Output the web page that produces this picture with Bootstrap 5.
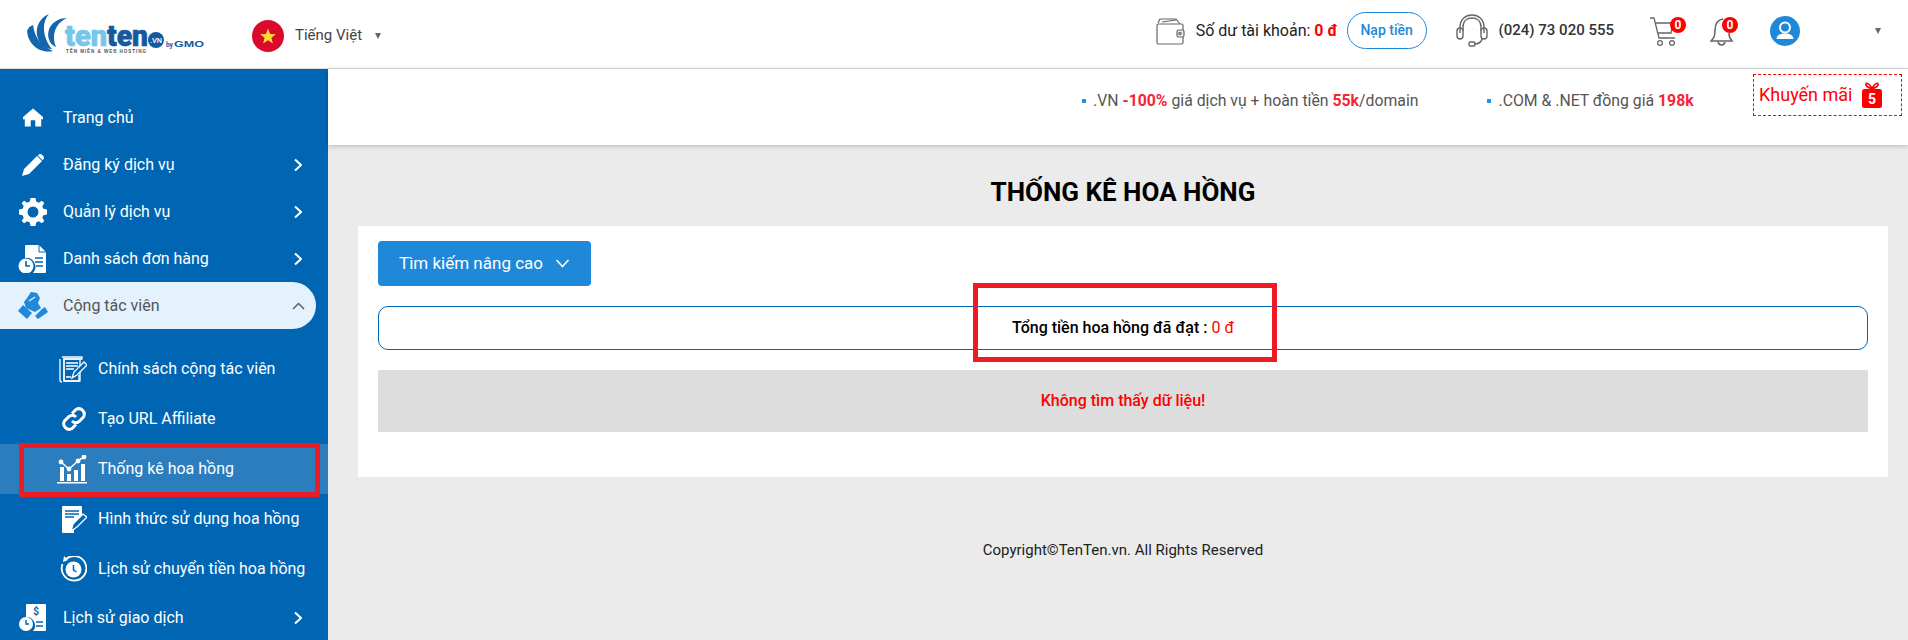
<!DOCTYPE html>
<html lang="vi">
<head>
<meta charset="utf-8">
<title>Thống kê hoa hồng</title>
<link href="https://cdn.jsdelivr.net/npm/bootstrap@5.3.0/dist/css/bootstrap.min.css" rel="stylesheet">
<style>
html,body{height:640px;overflow:hidden}
body{font-family:Roboto,"Liberation Sans",sans-serif;font-size:14px;background:#ebebeb;color:#111;position:relative;width:1908px}
.top-bar{height:69px;background:#fff;border-bottom:1px solid #ddd;position:relative}
.left-group{padding-top:3px;margin-right:auto}
.right-group{padding-bottom:7px}
.logo-box{margin-left:26px;width:180px;height:46px;flex:none;margin-top:-3px}
.flag-box{margin-left:46px;flex:none}
.lang-name{margin-left:11px;font-size:15px;color:#444}
.caret-mark{width:0;height:0;border-left:3.5px solid transparent;border-right:3.5px solid transparent;border-top:6px solid #666;flex:none}
.lang-caret{margin-left:13px}
.bal-text{margin-left:11px;font-size:16px;color:#222;white-space:nowrap}
.red-val{color:#f00;font-weight:700}
.topup{margin-left:9px;width:80px;height:37px;border:1px solid #1f88d9;border-radius:19px;color:#1f88d9;font-size:14px;font-weight:500;padding:0;background:#fff}
.topup:hover{color:#1f88d9;background:#fff}
.head-ic{margin-left:29px;flex:none}
.phone-no{margin-left:11px;font-size:15px;font-weight:500;color:#333;white-space:nowrap}
.cart-wrap{margin-left:36px;width:36px;height:36px;position:relative;flex:none}
.bell-wrap{margin-left:24px;width:28px;height:36px;position:relative;flex:none}
.count-dot{position:absolute;top:4px;right:0;width:16px;height:16px;border-radius:50%;background:#f00;color:#fff;font-size:12px;font-weight:700;line-height:16px;text-align:center}
.ava-wrap{margin-left:32px;flex:none}
.user-caret{margin-left:75px;margin-right:27px}
.side-panel{width:328px;height:571px;background:#0066b3;padding-top:25px;flex:none;overflow:hidden;color:#fff}
.menu-row{height:47px;display:flex;align-items:center;position:relative;font-size:16px;color:#fff;text-decoration:none;width:316px;font-weight:400}
.menu-row:hover{color:#fff}
.menu-ic{width:63px;flex:none;display:flex;justify-content:center;padding-right:6px;padding-left:8px}
.chev-ic{position:absolute;left:294px;top:50%;transform:translateY(-50%)}
.chev-up{left:292px}
.menu-open{background:#e3f2fc;color:#555;border-radius:0 24px 24px 0;margin-bottom:15px}
.menu-open:hover{color:#555}
.sub-row{height:50px;display:flex;align-items:center;font-size:16px;color:#fff;text-decoration:none;width:328px;font-weight:400}
.sub-row:hover{color:#fff}
.sub-row.on-row{background:#2b7dbd}
.sub-ic{width:98px;flex:none;display:flex;justify-content:flex-end;padding-right:11px}
.promo-strip{height:76px;background:#fff;box-shadow:0 1px 5px rgba(0,0,0,.22);position:relative;color:#555;font-size:15.8px}
.promo-item{display:flex;align-items:center;white-space:nowrap;padding-bottom:12px}
.promo-item b{color:#f42535;font-weight:700}
.sq-dot{width:4px;height:4px;background:#1e90f0;margin-right:7px;flex:none}
.item-one{margin-left:754px}
.item-two{margin-left:69px}
.sale-box{margin-left:auto;margin-right:6px;align-self:flex-start;margin-top:5px;width:149px;height:42px;border:1px dashed #f00;color:#f00;font-size:18px;display:flex;align-items:center;padding-left:5px;white-space:nowrap;line-height:1}
.gift-ic{margin-left:10px}
.page-head{font-size:26px;font-weight:700;color:#000;text-align:center;margin:0;height:81px;line-height:1;padding-top:34px;padding-left:10px}
.white-panel{margin:0 20px 0 30px;width:1530px;height:251px;background:#fff;padding:15px 20px;border:0;border-radius:0}
.search-btn{width:213px;height:45px;background:#1f88d9;border:0;border-radius:4px;font-size:17px;color:#fff;display:flex;align-items:center;padding:0 0 0 21px;font-weight:400}
.search-btn:hover{background:#1f88d9;color:#fff}
.search-chev{margin-left:12px}
.total-box{margin-top:20px;height:44px;border:1px solid #0066b3;border-radius:10px;display:flex;align-items:center;justify-content:center;font-size:16px;font-weight:500;color:#000;width:1490px}
.total-box span{color:#f00;font-weight:400;margin-left:4px}
.empty-box{margin-top:20px;height:62px;background:#ddd;display:flex;align-items:center;justify-content:center;color:#f00;font-size:16px;font-weight:500;width:1490px}
.foot-line{text-align:center;font-size:15px;color:#222;margin-top:62px;padding-left:10px}
.mark-red{position:absolute;border:5px solid #ed1c24;pointer-events:none}
.mark-side{left:19px;top:443px;width:301px;height:54px}
.mark-total{left:973px;top:283px;width:304px;height:79px}
</style>
</head>
<body>
<header class="top-bar d-flex align-items-center">
  <div class="left-group d-flex align-items-center">
  <div class="logo-box">
    <svg width="180" height="46" viewBox="0 0 180 46">
      <path d="M1 20 C2 33 13 43 27 40 C17 36 9 29 7 14 C4 15 2 17 1 20Z" fill="#1565ae"/>
      <path d="M23 3 C11 8 7 22 15 33 C18 36 22 38 26 38 C17 27 15 12 23 3Z" fill="#1565ae"/>
      <path d="M41 7 C28 7 18 18 24 31 C26 34 28 35 30 36 C25 23 30 12 41 7Z" fill="#1565ae"/>
      <text x="39" y="35" font-family="Roboto,'Liberation Sans',sans-serif" font-weight="900" font-size="30" textLength="42" lengthAdjust="spacingAndGlyphs" fill="#74c6ec" stroke="#74c6ec" stroke-width=".7">ten</text>
      <text x="81" y="35" font-family="Roboto,'Liberation Sans',sans-serif" font-weight="900" font-size="30" textLength="41" lengthAdjust="spacingAndGlyphs" fill="#16599f" stroke="#16599f" stroke-width=".7">ten</text>
      <circle cx="130" cy="29" r="8" fill="#16599f"/>
      <text x="130" y="32" text-anchor="middle" font-family="Roboto,sans-serif" font-size="7.5" font-weight="500" fill="#fff">.VN</text>
      <text x="140" y="36" font-family="Roboto,sans-serif" font-size="6.5" font-weight="700" fill="#16599f">by</text>
      <text x="148" y="36" font-family="'Liberation Sans',sans-serif" font-size="9.5" font-weight="700" textLength="30" lengthAdjust="spacingAndGlyphs" fill="#16599f">GMO</text>
      <text x="40" y="42" font-family="'Liberation Sans',sans-serif" font-size="4.6" font-weight="700" textLength="80" lengthAdjust="spacing" fill="#555">TÊN MIỀN &amp; WEB HOSTING</text>
    </svg>
  </div>
  <div class="flag-box">
    <svg width="32" height="32" viewBox="0 0 32 32" class="d-block"><circle cx="16" cy="16" r="16" fill="#da0a2c"/><polygon points="16,8.5 18.1,13.9 23.8,14.2 19.4,17.8 20.9,23.4 16,20.3 11.1,23.4 12.6,17.8 8.2,14.2 13.9,13.9" fill="#ffdb3a"/></svg>
  </div>
  <span class="lang-name">Tiếng Việt</span>
  <span class="caret-mark lang-caret"></span>
  </div>

  <div class="right-group d-flex align-items-center">
  <svg width="29" height="28" viewBox="0 0 29 28" fill="none" stroke="#666" stroke-width="1.2" class="flex-none"><path d="M2 6 L4 2 L20 2 L24 7"/><path d="M6 5 L20 3"/><rect x="1" y="7" width="26" height="20" rx="1.5"/><rect x="21" y="13" width="7" height="7" rx="1.5" fill="#eee"/><circle cx="24" cy="16.5" r="1.2"/></svg>
  <span class="bal-text">Số dư tài khoản: <span class="red-val">0 đ</span></span>
  <a class="btn topup d-flex align-items-center justify-content-center" href="#">Nạp tiền</a>

  <svg class="head-ic" width="32" height="33" viewBox="0 0 32 33" fill="none" stroke="#666" stroke-width="1.4"><path d="M4 19 V13 C4 5 10 1 16 1 C22 1 28 5 28 13 V19"/><path d="M7 17 V13 C7 7 11 4 16 4 C21 4 25 7 25 13 V17"/><rect x="1" y="14" width="6" height="11" rx="3"/><rect x="25" y="14" width="6" height="11" rx="3"/><path d="M26 25 C25 29 22 30 18 30"/><rect x="13" y="28" width="6" height="4" rx="1.5"/><path d="M12 16 h.1 M16 16 h.1 M20 16 h.1"/></svg>
  <span class="phone-no">(024) 73 020 555</span>

  <div class="cart-wrap">
    <svg width="30" height="32" viewBox="0 0 30 32" fill="none" stroke="#666" stroke-width="1.3" class="position-absolute top-0 start-0 mt-1"><path d="M0 1 H4 L9 21 H25"/><path d="M5.5 6 H23 L21 16 H8"/><circle cx="10" cy="26" r="2.4"/><circle cx="22" cy="26" r="2.4"/></svg>
    <span class="count-dot">0</span>
  </div>
  <div class="bell-wrap">
    <svg width="24" height="32" viewBox="0 0 24 32" fill="none" stroke="#666" stroke-width="1.5" class="position-absolute top-0 start-0 mt-1"><path d="M13 2 C7 3 5 8 5 13 C5 19 4 21 1 24 H22 C20 22 19 20 19 16"/><path d="M8 25 C9 29 14 29 15 25"/></svg>
    <span class="count-dot">0</span>
  </div>
  <svg class="ava-wrap" width="30" height="30" viewBox="0 0 30 30"><circle cx="15" cy="15" r="15" fill="#1f88d9"/><circle cx="15" cy="11.5" r="5" fill="none" stroke="#fff" stroke-width="2"/><path d="M6.5 23 C7 19 10 17.5 15 17.5 C20 17.5 23 19 23.5 23Z" fill="#fff"/></svg>
  <span class="caret-mark user-caret"></span>
  </div>
</header>

<div class="d-flex">
  <nav class="side-panel">
    <a class="menu-row" href="#"><span class="menu-ic"><svg width="20" height="19" viewBox="0 0 22 20"><path d="M11 0 L0 9.5 V12 H2 V20 H8.5 V13 H13.5 V20 H20 V12 H22 V9.5Z" fill="#fff"/></svg></span>Trang chủ</a>
    <a class="menu-row" href="#"><span class="menu-ic"><svg width="22" height="22" viewBox="0 0 22 22"><path d="M0 22 L2 15 L15 2 L20 7 L7 20Z M16.5 .8 C17.5 -.2 19 -.2 20 .8 L21.2 2 C22.2 3 22.2 4.5 21.2 5.5 L20.5 6.2 L15.8 1.5Z" fill="#fff"/></svg></span>Đăng ký dịch vụ<svg class="chev-ic" width="8" height="13" viewBox="0 0 8 13" fill="none" stroke="#fff" stroke-width="2"><path d="M1 1 L7 6.5 L1 12"/></svg></a>
    <a class="menu-row" href="#"><span class="menu-ic"><svg width="28" height="28" viewBox="0 0 28 28"><path fill-rule="evenodd" d="M11.5 0 H16.5 L17.2 3.6 L19.8 4.7 L22.9 2.7 L25.3 5.1 L23.3 8.2 L24.4 10.8 L28 11.5 V16.5 L24.4 17.2 L23.3 19.8 L25.3 22.9 L22.9 25.3 L19.8 23.3 L17.2 24.4 L16.5 28 H11.5 L10.8 24.4 L8.2 23.3 L5.1 25.3 L2.7 22.9 L4.7 19.8 L3.6 17.2 L0 16.5 V11.5 L3.6 10.8 L4.7 8.2 L2.7 5.1 L5.1 2.7 L8.2 4.7 L10.8 3.6Z M14 8.5 A5.5 5.5 0 1 0 14 19.5 A5.5 5.5 0 1 0 14 8.5Z" fill="#fff"/></svg></span>Quản lý dịch vụ<svg class="chev-ic" width="8" height="13" viewBox="0 0 8 13" fill="none" stroke="#fff" stroke-width="2"><path d="M1 1 L7 6.5 L1 12"/></svg></a>
    <a class="menu-row" href="#"><span class="menu-ic"><svg width="29" height="28" viewBox="0 0 29 28"><path d="M7 1 Q7 0 8 0 H21 L28 7 V27 Q28 28 27 28 H15 A9 9 0 0 0 7 13Z" fill="#fff"/><path d="M21 0 V7 H28" fill="none" stroke="#0066b3"/><path d="M17 13 H25 M17 17 H25 M18 21 H25" stroke="#0066b3" stroke-width="1.6"/><circle cx="8" cy="21" r="7.5" fill="#fff"/><path d="M8 16 V21 H12" fill="none" stroke="#0066b3" stroke-width="1.6"/></svg></span>Danh sách đơn hàng<svg class="chev-ic" width="8" height="13" viewBox="0 0 8 13" fill="none" stroke="#fff" stroke-width="2"><path d="M1 1 L7 6.5 L1 12"/></svg></a>
    <a class="menu-row menu-open" href="#"><span class="menu-ic"><svg width="30" height="29" viewBox="0 0 30 29"><path d="M13 1 L19 2 L22 7 L20 12 L23 17 L17 21 L8 17 L6 11 L9 7Z" fill="#1f88d9"/><path d="M5 14 L0 20 L9 28 L14 22Z M24 18 L17 25 L20 28 L30 21 L27 16Z" fill="#1f88d9"/><path d="M11 10 L17 6" stroke="#e3f2fc" stroke-width="1.4"/></svg></span>Cộng tác viên<svg class="chev-ic chev-up" width="13" height="8" viewBox="0 0 13 8" fill="none" stroke="#555" stroke-width="1.4"><path d="M1 7 L6.5 1.5 L12 7"/></svg></a>

    <a class="sub-row" href="#"><span class="sub-ic"><svg width="28" height="28" viewBox="0 0 28 28" fill="none" stroke="#fff" stroke-width="1.3"><path d="M3 2 H23 V4 H5 V26 H20 V20"/><path d="M1 4 V25 Q1 27 3 27"/><rect x="5" y="4" width="16" height="22"/><path d="M7 8 H19 M7 11 H19 M7 14 H15 M7 22 H12" stroke-width="1.6"/><path d="M13 23 L15 17 L25 7 L28 10 L18 20Z" fill="#0066b3"/></svg></span>Chính sách cộng tác viên</a>
    <a class="sub-row" href="#"><span class="sub-ic"><svg width="26" height="26" viewBox="0 0 26 26" fill="none" stroke="#fff" stroke-width="3"><path d="M11 7.500 L15 3.500 A5.500 5.500 0 0 1 22.500 11 L18 15.500 A5.500 5.500 0 0 1 11 15"/><path d="M15 18.500 L11 22.500 A5.500 5.500 0 0 1 3.500 15 L8 10.500 A5.500 5.500 0 0 1 15 11"/></svg></span>Tạo URL Affiliate</a>
    <a class="sub-row on-row" href="#"><span class="sub-ic"><svg width="30" height="29" viewBox="0 0 30 29"><path d="M3 12 H7 V26 H3Z M10 19 H14 V26 H10Z M17 15 H21 V26 H17Z M24 9 H28 V26 H24Z M0 27 H30 V28.500 H0Z" fill="#fff"/><path d="M4 7 L12 14 L22 5 L27 2" fill="none" stroke="#fff" stroke-width="1.500"/><circle cx="4" cy="7" r="2.400" fill="#fff"/><circle cx="12" cy="14" r="2.400" fill="#fff"/><circle cx="21" cy="6" r="2.400" fill="#fff"/><circle cx="27" cy="2" r="2.400" fill="#fff"/></svg></span>Thống kê hoa hồng</a>
    <a class="sub-row" href="#"><span class="sub-ic"><svg width="25" height="27" viewBox="0 0 25 27"><path d="M0 1 Q0 0 1 0 H19 Q20 0 20 1 V11 L12 21 V27 H1 Q0 27 0 26Z" fill="#fff"/><path d="M3 5 H17 M3 8 H17 M3 11 H12" stroke="#0066b3" stroke-width="1.400"/><path d="M9 25 L11 18 L21 8 L25 11 L15 21Z" fill="#0066b3" stroke="#fff" stroke-width="1.300"/></svg></span>Hình thức sử dụng hoa hồng</a>
    <a class="sub-row" href="#"><span class="sub-ic"><svg width="27" height="27" viewBox="0 0 27 27" fill="none"><path d="M6 3 A12.300 12.300 0 1 1 2.500 8" stroke="#fff" stroke-width="1.800"/><path d="M4 0 L8 4 L3 6Z" fill="#fff"/><circle cx="13.500" cy="13.500" r="8" fill="#fff"/><path d="M13.500 9 V14 L16.500 16" stroke="#0066b3" stroke-width="1.500"/></svg></span>Lịch sử chuyển tiền hoa hồng</a>
    <a class="menu-row" href="#"><span class="menu-ic"><svg width="27" height="27" viewBox="0 0 27 27"><path d="M7 1 Q7 0 8 0 H26 Q27 0 27 1 V26 Q27 27 26 27 H14 A8.500 8.500 0 0 0 7 13Z" fill="#fff"/><text x="17" y="11" text-anchor="middle" font-family="Roboto,sans-serif" font-size="10" font-weight="700" fill="#0066b3">$</text><path d="M17 18 H24 M17 22 H24" stroke="#0066b3" stroke-width="1.500"/><circle cx="7" cy="20" r="7" fill="#fff"/><path d="M7 16 V20 H10" fill="none" stroke="#0066b3" stroke-width="1.400"/></svg></span>Lịch sử giao dịch<svg class="chev-ic" width="8" height="13" viewBox="0 0 8 13" fill="none" stroke="#fff" stroke-width="2"><path d="M1 1 L7 6.500 L1 12"/></svg></a>
  </nav>

  <main class="flex-grow-1">
    <div class="promo-strip d-flex align-items-center">
      <div class="promo-item item-one"><span class="sq-dot"></span><span>.VN <b>-100%</b> giá dịch vụ + hoàn tiền <b>55k</b>/domain</span></div>
      <div class="promo-item item-two"><span class="sq-dot"></span><span>.COM &amp; .NET đồng giá <b>198k</b></span></div>
      <div class="sale-box"><span>Khuyến mãi</span>
        <svg class="gift-ic" width="20" height="26" viewBox="0 0 20 26"><path d="M10 7 C8 1 3 0 4 3 C4.500 5 8 6 10 7 C12 1 17 0 16 3 C15.500 5 12 6 10 7Z" fill="none" stroke="#f00" stroke-width="1.600"/><rect y="7" width="20" height="19" rx="2.500" fill="#f00"/><text x="10" y="22" text-anchor="middle" font-family="Roboto,sans-serif" font-size="14" font-weight="700" fill="#fff">5</text></svg>
      </div>
    </div>
    <h1 class="page-head">THỐNG KÊ HOA HỒNG</h1>
    <section class="card white-panel">
      <button type="button" class="btn search-btn">Tìm kiếm nâng cao<svg class="search-chev" width="15" height="9" viewBox="0 0 15 9" fill="none" stroke="#fff" stroke-width="1.600"><path d="M1.500 1 L7.500 7.500 L13.500 1"/></svg></button>
      <div class="total-box">Tổng tiền hoa hồng đã đạt : <span>0 đ</span></div>
      <div class="empty-box">Không tìm thấy dữ liệu!</div>
    </section>
    <p class="foot-line">Copyright©TenTen.vn. All Rights Reserved</p>
  </main>
</div>
<div class="mark-red mark-side"></div>
<div class="mark-red mark-total"></div>
<script src="https://cdn.jsdelivr.net/npm/bootstrap@5.3.0/dist/js/bootstrap.bundle.min.js"></script>
</body>
</html>
